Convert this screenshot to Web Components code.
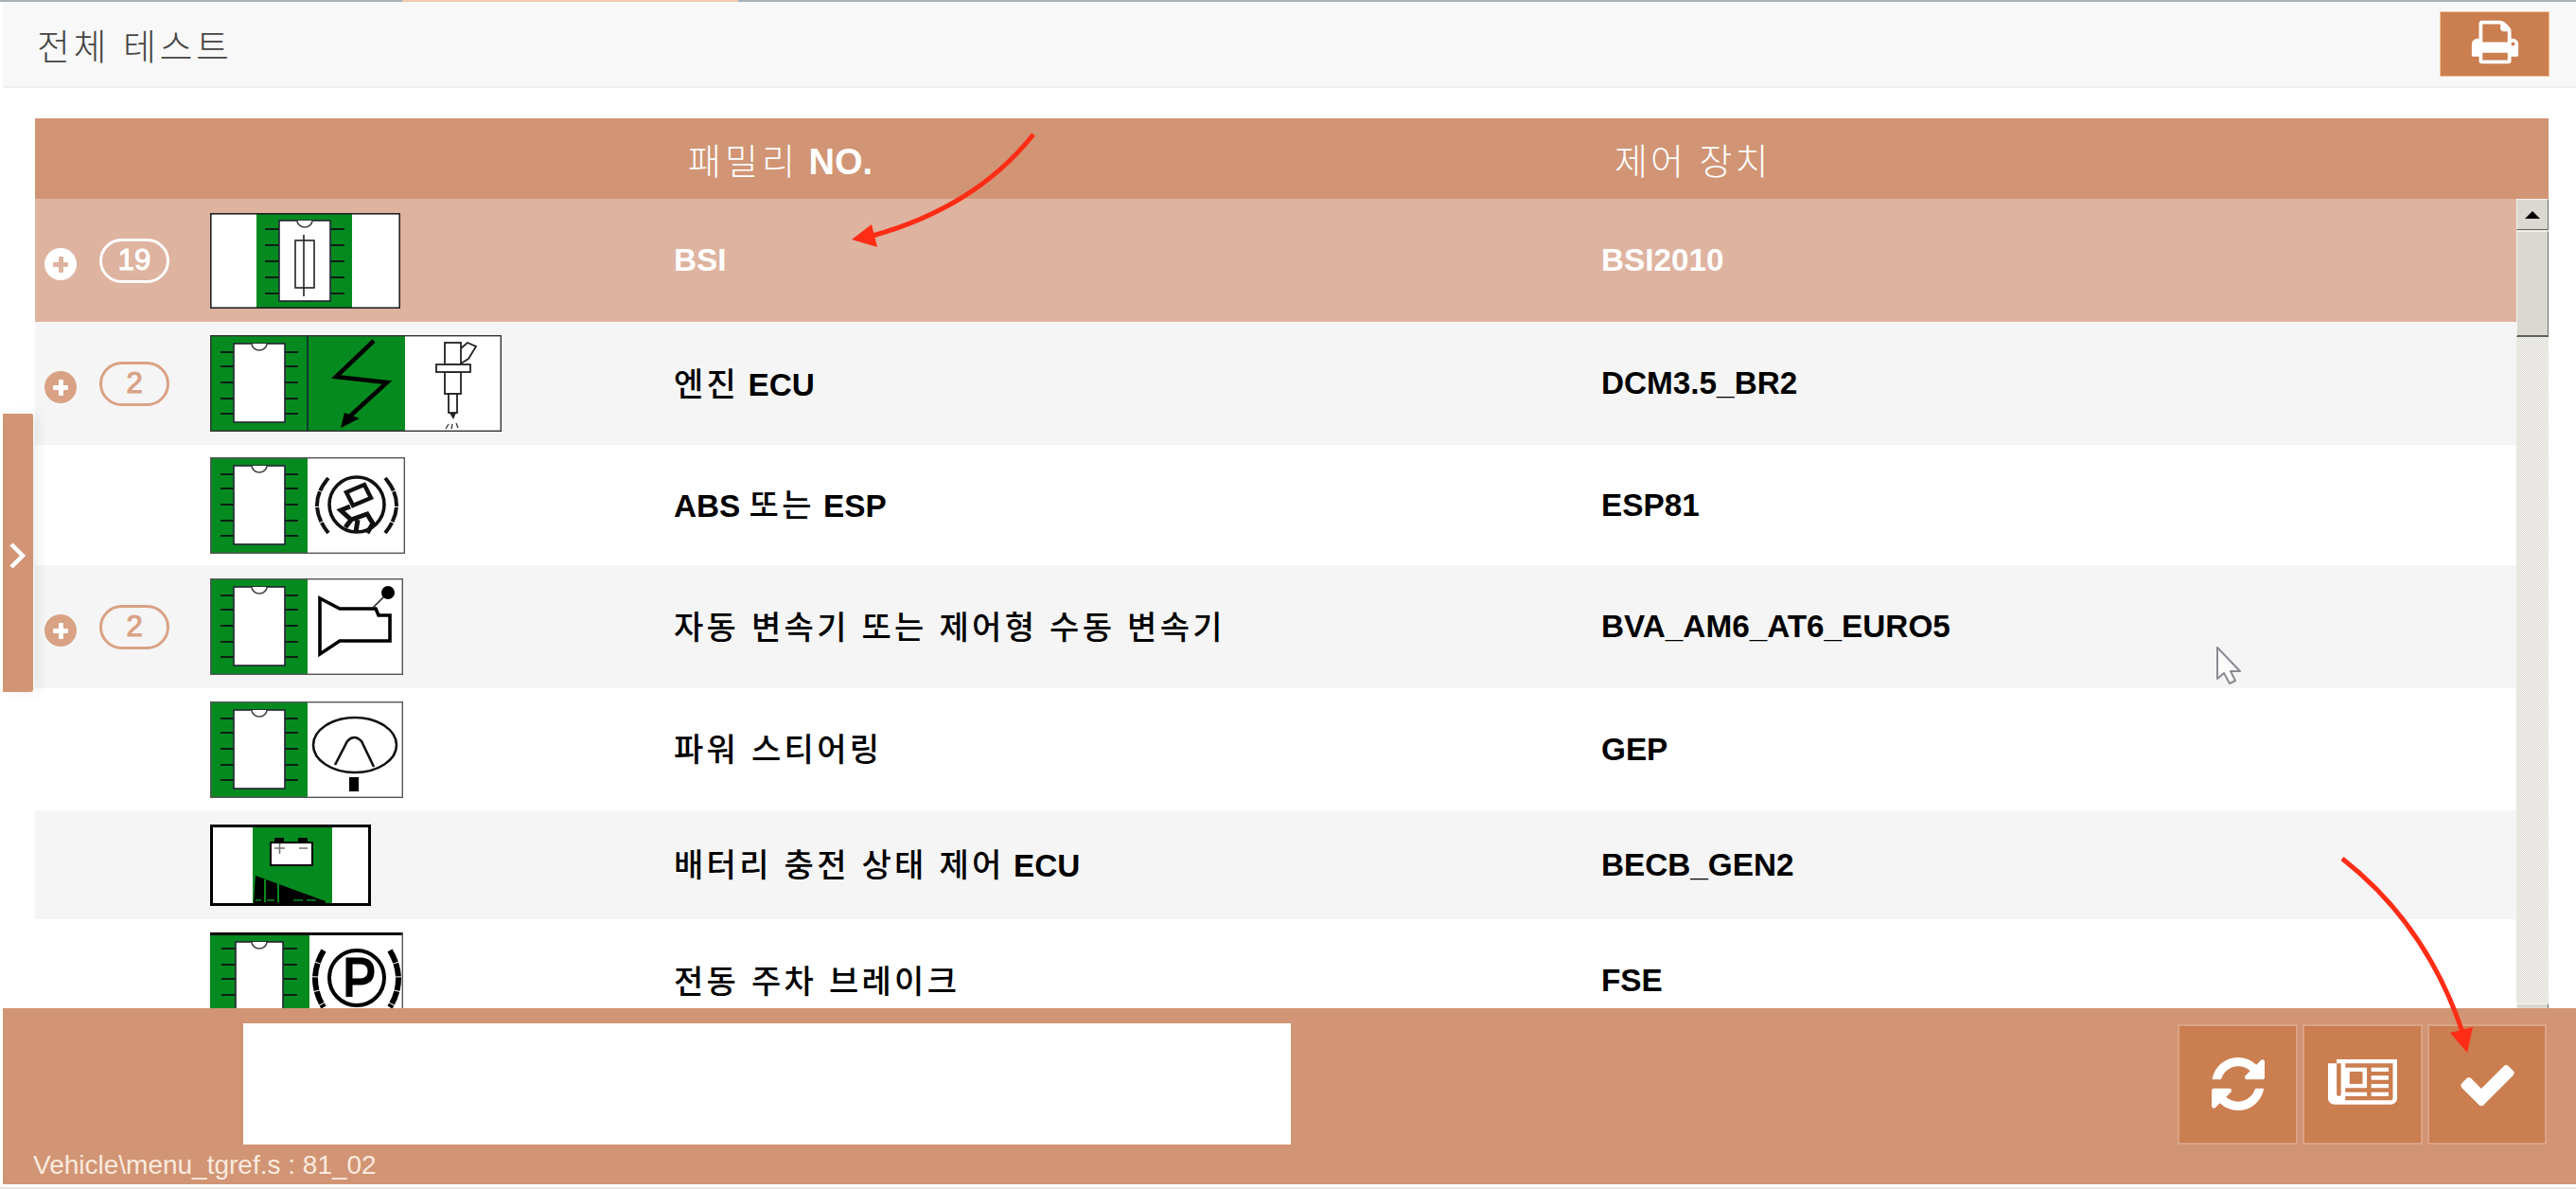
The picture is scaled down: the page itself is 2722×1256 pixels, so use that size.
<!DOCTYPE html>
<html lang="ko">
<head>
<meta charset="utf-8">
<title>전체 테스트</title>
<style>
  html, body { margin: 0; padding: 0; background: #fff; }
  body { font-family: "Liberation Sans", "Noto Sans CJK KR", sans-serif; width: 2722px; height: 1256px; overflow: hidden; }
</style>
</head>
<body>
<test-page>
  <title-bar slot="top"><kr-text size="38" space="3.5" weight="300" color="#444">전체 테스트</kr-text></title-bar>

  <table-head slot="main">
    <span slot="family"><kr-text size="38" space="4" weight="300">패밀리</kr-text> <b>NO.</b></span>
    <span slot="device"><kr-text size="38" space="3" weight="300">제어 장치</kr-text></span>
  </table-head>

  <test-list slot="main">
    <test-row h="130" state="sel" count="19" device="BSI2010"><ecu-icon slot="icon" kind="fuse"></ecu-icon>BSI</test-row>
    <test-row h="130" state="alt" count="2" device="DCM3.5_BR2"><ecu-icon slot="icon" kind="engine"></ecu-icon><kr-text>엔진</kr-text> ECU</test-row>
    <test-row h="127" device="ESP81"><ecu-icon slot="icon" kind="abs"></ecu-icon>ABS <kr-text>또는</kr-text> ESP</test-row>
    <test-row h="130" state="alt" count="2" device="BVA_AM6_AT6_EURO5"><ecu-icon slot="icon" kind="gearbox"></ecu-icon><kr-text>자동 변속기 또는 제어형 수동 변속기</kr-text></test-row>
    <test-row h="129" device="GEP"><ecu-icon slot="icon" kind="steering"></ecu-icon><kr-text>파워 스티어링</kr-text></test-row>
    <test-row h="115" state="alt" device="BECB_GEN2"><ecu-icon slot="icon" kind="battery"></ecu-icon><kr-text>배터리 충전 상태 제어</kr-text> ECU</test-row>
    <test-row h="130" device="FSE"><ecu-icon slot="icon" kind="parking"></ecu-icon><kr-text>전동 주차 브레이크</kr-text></test-row>
  </test-list>

  <bottom-bar slot="bottom" path="Vehicle\menu_tgref.s : 81_02"></bottom-bar>
  <side-handle slot="over"></side-handle>
  <annot-layer slot="over"></annot-layer>
</test-page>

<script>
const fa = {
  print: ["0 0 1792 1792", "M448 1536h896v-256h-896v256zm0-640h896v-384h-160q-40 0-68-28t-28-68v-160h-640v640zm1152 64q0-26-19-45t-45-19-45 19-19 45 19 45 45 19 45-19 19-45zm128 0v416q0 13-9.5 22.5t-22.5 9.5h-224v160q0 40-28 68t-68 28h-960q-40 0-68-28t-28-68v-160h-224q-13 0-22.5-9.5t-9.5-22.5v-416q0-79 56.5-135.5t135.5-56.5h64v-544q0-40 28-68t68-28h672q40 0 88 20t76 48l152 152q28 28 48 76t20 88v256h64q79 0 135.5 56.5t56.5 135.5z"],
  refresh: ["0 0 1536 1536", "M1511 928q0 5-1 7-64 268-268 434.5t-478 166.5q-146 0-282.5-55t-243.5-157l-129 129q-19 19-45 19t-45-19-19-45v-448q0-26 19-45t45-19h448q26 0 45 19t19 45-19 45l-137 137q71 66 161 102t187 36q134 0 250-65t186-179q11-17 53-117 8-23 30-23h192q13 0 22.5 9.5t9.5 22.5zm25-800v448q0 26-19 45t-45 19h-448q-26 0-45-19t-19-45 19-45l138-138q-148-137-349-137-134 0-250 65t-186 179q-11 17-53 117-8 23-30 23h-199q-13 0-22.5-9.5t-9.5-22.5v-7q65-268 270-434.5t480-166.5q146 0 284 55.5t245 156.5l130-129q19-19 45-19t45 19 19 45z"],
  news: ["0 128 2048 1536", "M1024 512h-384v384h384v-384zm128 640v128h-640v-128h640zm0-768v640h-640v-640h640zm640 768v128h-512v-128h512zm0-256v128h-512v-128h512zm0-256v128h-512v-128h512zm0-256v128h-512v-128h512zm128 960v-1088h-1408v1088q0 30-11 64h1355q26 0 45-19t19-45zm-1536-192v-896h-128v960q0 26 19 45t45 19 45-19 19-45zm1664 192q0 80-56 136t-136 56h-1664q-80 0-136-56t-56-136v-1088h256v-128h1792v1216z"],
  check: ["0 0 1792 1792", "M1671 566q0 40-28 68l-724 724-136 136q-28 28-68 28t-68-28l-136-136-362-362q-28-28-28-68t28-68l136-136q28-28 68-28t68 28l294 295 656-657q28-28 68-28t68 28l136 136q28 28 28 68z"]
};

function faSvg(name, w, h) {
  return `<svg width="${w}" height="${h}" viewBox="${fa[name][0]}" preserveAspectRatio="none"><path fill="#fff" d="${fa[name][1]}"/></svg>`;
}

class KrText extends HTMLElement {
  constructor() {
    super();
    const size = this.getAttribute("size") || 34;
    const space = this.getAttribute("space") || 3.3;
    const weight = this.getAttribute("weight") || 500;
    const color = this.getAttribute("color") || "inherit";
    this.attachShadow({ mode: "open" }).innerHTML = `
      <style>
        :host { display: inline; font-family: "Noto Sans CJK KR", sans-serif; font-size: ${size}px; letter-spacing: ${space}px; font-weight: ${weight}; color: ${color}; }
      </style><slot></slot>`;
  }
}

class TitleBar extends HTMLElement {
  constructor() {
    super();
    this.attachShadow({ mode: "open" }).innerHTML = `
      <style>
        :host { display: flex; align-items: center; justify-content: space-between; height: 89px; margin-left: 3px; padding: 0 28px 0 36px; background: #f8f8f8; border-bottom: 2px solid #efefef; }
        .print { display: flex; align-items: center; justify-content: center; width: 114px; height: 67px; margin-top: -1px; background: #cb7e50; border: 1px solid #f3c08f; }
        svg { display: block; margin-top: -4px; }
      </style>
      <slot></slot>
      <div class="print">${faSvg("print", 53, 53)}</div>`;
  }
}

class TableHead extends HTMLElement {
  constructor() {
    super();
    this.attachShadow({ mode: "open" }).innerHTML = `
      <style>
        :host { display: grid; grid-template-columns: 675px 980px 1fr; align-items: center; flex: none; height: 85px; background: #d19575; color: #fff; font-size: 38px; font-weight: 400; white-space: nowrap; }
        .fam { grid-column: 2; padding-left: 15px; }
        .dev { grid-column: 3; padding-left: 14px; }
      </style>
      <div class="fam"><slot name="family"></slot></div>
      <div class="dev"><slot name="device"></slot></div>`;
  }
}

class TestList extends HTMLElement {
  constructor() {
    super();
    this.attachShadow({ mode: "open" }).innerHTML = `
      <style>
        :host { display: flex; flex: 1; min-height: 0; overflow: hidden; }
        .rows { flex: 1; min-width: 0; overflow: hidden; }
        .bar { width: 34px; flex: none; display: flex; flex-direction: column; background: repeating-conic-gradient(#dbd9d3 0 25%, #f6f5f2 0 50%) 0 0 / 2px 2px; }
        .btn { background: #dbd8d2; border: 1px solid; border-color: #f4f3f0 #6f6f6f #5f5f5f #f4f3f0; box-sizing: border-box; }
        .up { height: 33px; margin-bottom: 1px; display: flex; align-items: center; justify-content: center; }
        .up i { width: 0; height: 0; border: 8px solid transparent; border-top: 0; border-bottom: 8px solid #000; }
        .thumb { height: 112px; border-bottom-width: 2px; }
        .gap { flex: 1; }
        .down { height: 5px; border-bottom: 0; }
      </style>
      <div class="rows"><slot></slot></div>
      <div class="bar">
        <div class="btn up"><i></i></div>
        <div class="btn thumb"></div>
        <div class="gap"></div>
        <div class="btn down"></div>
      </div>`;
  }
}

class TestRow extends HTMLElement {
  constructor() {
    super();
    const count = this.getAttribute("count");
    const device = this.getAttribute("device") || "";
    const h = this.getAttribute("h") || 130;
    this.attachShadow({ mode: "open" }).innerHTML = `
      <style>
        :host { display: grid; grid-template-columns: 185px 490px 980px 1fr; align-items: center; height: ${h}px; background: #fff; color: #000; font-size: 33.300px; font-weight: 700; white-space: nowrap; }
        :host([state="alt"]) { background: #f5f5f5; }
        :host([state="sel"]) { background: #deb3a0; color: #fff; --tone: #fff; --plus: #deb3a0; }
        .exp { display: flex; align-items: center; gap: 24px; padding-left: 10px; }
        .plus { width: 34px; height: 34px; border-radius: 50%; background: var(--tone, #d9a285); position: relative; margin-top: 7px; }
        .plus::before, .plus::after { content: ""; position: absolute; background: var(--plus, #fff); border-radius: 1px; }
        .plus::before { left: 9px; right: 9px; top: 15px; height: 5px; }
        .plus::after { top: 9px; bottom: 8px; left: 15px; width: 5px; }
        .count { box-sizing: border-box; width: 74px; height: 47px; border: 3px solid var(--tone, #d9a285); border-radius: 24px; color: var(--tone, #d9a285); font-size: 31px; font-weight: 400; -webkit-text-stroke: 1.1px var(--tone, #d9a285); display: flex; align-items: center; justify-content: center; }
        .icon { display: flex; }
        .name, .dev { line-height: 44px; }
      </style>
      <div class="exp">${count ? `<div class="plus"></div><div class="count">${count}</div>` : ""}</div>
      <div class="icon"><slot name="icon"></slot></div>
      <div class="name"><slot></slot></div>
      <div class="dev">${device}</div>`;
  }
}

// chip with its five pins on both sides, used by most of the pictograms
function chip(x1, x2, y1, y2, pins, len) {
  const cx = (x1 + x2) / 2;
  let s = "";
  for (const y of pins) {
    s += `<path d="M${x1 - len} ${y}H${x1}M${x2} ${y}H${x2 + len}" stroke="#0c1f12" stroke-width="2"/>`;
  }
  s += `<rect x="${x1}" y="${y1}" width="${x2 - x1}" height="${y2 - y1}" fill="#fff" stroke="#223" stroke-width="1.6"/>`;
  s += `<path d="M${cx - 8} ${y1}a8 7 0 0 0 16 0" fill="#fff" stroke="#444" stroke-width="1.6"/>`;
  return s;
}

const GREEN = "#058a1f";
const PINS = [18, 33, 50, 67, 83];

const pictos = {
  fuse: [201, 101, `
    <rect width="201" height="101" fill="#fff"/>
    <rect x="49" width="101" height="101" fill="${GREEN}"/>
    ${chip(73, 127, 8, 93, [17, 34, 51, 68, 85], 15)}
    <rect x="90" y="29" width="20" height="50" fill="none" stroke="#222" stroke-width="1.6"/>
    <path d="M99 23V88" stroke="#222" stroke-width="1.6"/>
    <rect x=".8" y=".8" width="199.4" height="99.4" fill="none" stroke="#222" stroke-width="1.6"/>`],
  engine: [308, 102, `
    <rect width="308" height="102" fill="#fff"/>
    <rect width="206" height="102" fill="${GREEN}"/>
    <path d="M103 0V102" stroke="#123" stroke-width="1.5"/>
    ${chip(25, 79, 9, 92, PINS, 14)}
    <path d="M173 6L133 44L187 50L143 90" fill="none" stroke="#000" stroke-width="4.5"/>
    <path d="M138 98L142 82L158 88z" fill="#000"/>
    <g fill="#fff" stroke="#222" stroke-width="1.8">
      <path d="M265 14L272 8L281 12L273 25L265 30"/>
      <rect x="248" y="8" width="17" height="23"/>
      <rect x="248" y="39" width="17" height="23"/>
      <rect x="252" y="62" width="9" height="20"/>
      <rect x="239" y="31" width="36" height="8"/>
    </g>
    <path d="M253 82H260L257 89z" fill="#222"/>
    <path d="M249 99l3-5M255 99l1-5M262 98l-2-5" stroke="#333" stroke-width="1.3"/>
    <rect x=".7" y=".7" width="306.6" height="100.6" fill="none" stroke="#333" stroke-width="1.4"/>`],
  abs: [206, 102, `
    <rect width="206" height="102" fill="#fff"/>
    <rect width="103" height="102" fill="${GREEN}"/>
    ${chip(25, 79, 9, 92, PINS, 14)}
    <circle cx="155" cy="50" r="29" fill="none" stroke="#111" stroke-width="3.6"/>
    <path d="M125 22Q101 50 125 80M185 22Q209 50 185 80" fill="none" stroke="#111" stroke-width="4" stroke-dasharray="16 1"/>
    <path d="M144 37L163 29L170 43L151 51z" fill="#fff" stroke="#111" stroke-width="4.4"/>
    <path d="M148 52L138 56L149 66L143 74M149 66L166 60L172 70L166 80M156 66L154 79" fill="none" stroke="#111" stroke-width="5"/>
    <rect x=".7" y=".7" width="204.6" height="100.6" fill="none" stroke="#555" stroke-width="1.4"/>`],
  gearbox: [204, 102, `
    <rect width="204" height="102" fill="#fff"/>
    <rect width="103" height="102" fill="${GREEN}"/>
    ${chip(25, 79, 9, 92, PINS, 14)}
    <path d="M116 21L137 32H175L178 39H190V66H137L116 80z" fill="none" stroke="#000" stroke-width="3.6"/>
    <path d="M172 31L187 16" stroke="#222" stroke-width="1.6"/>
    <circle cx="188" cy="15" r="7" fill="#000"/>
    <rect x=".7" y=".7" width="202.6" height="100.6" fill="none" stroke="#555" stroke-width="1.4"/>`],
  steering: [204, 102, `
    <rect width="204" height="102" fill="#fff"/>
    <rect width="103" height="102" fill="${GREEN}"/>
    ${chip(25, 79, 9, 92, PINS, 14)}
    <ellipse cx="153" cy="46" rx="44" ry="29" fill="none" stroke="#111" stroke-width="2.6"/>
    <path d="M132 67L145 42Q152 34 160 42L173 69" fill="none" stroke="#111" stroke-width="2.6"/>
    <rect x="147" y="80" width="10" height="15" fill="#000"/>
    <rect x=".7" y=".7" width="202.6" height="100.6" fill="none" stroke="#555" stroke-width="1.4"/>`],
  battery: [170, 86, `
    <rect width="170" height="86" fill="#fff"/>
    <rect x="45" width="84" height="86" fill="${GREEN}"/>
    <path d="M68 19V14H78V19M93 19V14H103V19" fill="#000"/>
    <rect x="64" y="19" width="44" height="24" fill="#fff" stroke="#000" stroke-width="2"/>
    <path d="M68 25H79M73.500 20V31M94 25H103" stroke="#777" stroke-width="1.6"/>
    <path d="M48 54L122 81V83H46z" fill="#000"/>
    <path d="M58 58V82M72 62V82" stroke="${GREEN}" stroke-width="2"/>
    <path d="M48 80h6M60 80h8M88 80h10M102 80h10" stroke="${GREEN}" stroke-width="1.4"/>
    <rect x="1.500" y="1.500" width="167" height="83" fill="none" stroke="#000" stroke-width="3"/>`],
  parking: [204, 102, `
    <rect width="204" height="102" fill="#fff"/>
    <rect width="105" height="102" fill="${GREEN}"/>
    ${chip(27, 77, 10, 100, [17, 34, 49, 66, 83], 15)}
    <circle cx="155" cy="48" r="29" fill="none" stroke="#000" stroke-width="4"/>
    <path d="M147 68V30H160Q170 31 170 41Q170 51 160 52H147" fill="none" stroke="#000" stroke-width="7"/>
    <path d="M120 19Q102 49 120 79M190 19Q208 49 190 79" fill="none" stroke="#000" stroke-width="6" stroke-dasharray="14 1"/>
    <path d="M0 1.500H204" stroke="#000" stroke-width="3"/>
    <path d="M203.300 0V102" stroke="#555" stroke-width="1.4"/>`]
};

class EcuIcon extends HTMLElement {
  constructor() {
    super();
    const [w, h, body] = pictos[this.getAttribute("kind")];
    this.attachShadow({ mode: "open" }).innerHTML = `
      <style>:host { display: block; width: ${w}px; height: ${h}px; } svg { display: block; }</style>
      <svg width="${w}" height="${h}" viewBox="0 0 ${w} ${h}">${body}</svg>`;
  }
}

class BottomBar extends HTMLElement {
  constructor() {
    super();
    const path = this.getAttribute("path") || "";
    this.attachShadow({ mode: "open" }).innerHTML = `
      <style>
        :host { display: flex; flex-direction: column; flex: none; height: 186px; margin-left: 3px; background: #d19575; }
        .top { display: flex; align-items: center; height: 128px; margin-top: 16px; padding-left: 254px; padding-right: 31px; }
        .box { width: 1107px; height: 128px; background: #fff; }
        .acts { margin-left: auto; display: flex; gap: 5px; }
        .act { box-sizing: border-box; width: 127px; height: 127px; background: #cb7e50; border: 2px solid #dba386; display: flex; align-items: center; justify-content: center; }
        .act.last { width: 126px; }
        .path { padding: 6px 0 0 32px; color: #fbeadf; font-size: 28px; line-height: 32px; }
      </style>
      <div class="top">
        <div class="box"></div>
        <div class="acts">
          <div class="act">${faSvg("refresh", 56, 56)}</div>
          <div class="act">${faSvg("news", 73, 52)}</div>
          <div class="act last">${faSvg("check", 65, 65)}</div>
        </div>
      </div>
      <div class="path">${path}</div>`;
  }
}

class SideHandle extends HTMLElement {
  constructor() {
    super();
    this.attachShadow({ mode: "open" }).innerHTML = `
      <style>
        :host { position: absolute; left: 3px; top: 437px; width: 32px; height: 294px; background: #d19575; border-radius: 0 2px 3px 0; box-shadow: 6px 0 12px rgba(0,0,0,.07); display: flex; align-items: center; justify-content: center; }
        svg { display: block; margin: 5px 2px 0 0; }
      </style>
      <svg width="20" height="30" viewBox="0 0 20 30"><path d="M4 3L16 15L4 27" fill="none" stroke="#fff" stroke-width="4.500"/></svg>`;
  }
}

// red hand drawn arrows and the mouse pointer captured on top of the page
class AnnotLayer extends HTMLElement {
  constructor() {
    super();
    this.attachShadow({ mode: "open" }).innerHTML = `
      <style>:host { position: absolute; inset: 0; pointer-events: none; } svg { display: block; }</style>
      <svg width="2722" height="1256" viewBox="0 0 2722 1256">
        <path d="M1092 142C1050 195 990 230 922 249" fill="none" stroke="#ff2d16" stroke-width="5"/>
        <path d="M900 253L921 237L927 261z" fill="#ff2d16"/>
        <path d="M2475 907C2530 950 2575 1010 2602 1090" fill="none" stroke="#ff2d16" stroke-width="5"/>
        <path d="M2607 1112L2589 1091L2613 1085z" fill="#ff2d16"/>
        <path d="M2343 684V717L2350 711L2356 722L2362 719L2357 709H2367z" fill="#fbfbfb" stroke="#8a8a92" stroke-width="2" stroke-linejoin="round"/>
      </svg>`;
  }
}

class TestPage extends HTMLElement {
  constructor() {
    super();
    this.attachShadow({ mode: "open" }).innerHTML = `
      <style>
        :host { display: flex; flex-direction: column; position: relative; width: 2722px; height: 1256px; background: #fff; overflow: hidden; }
        .strip { height: 2px; flex: none; background: linear-gradient(90deg, #a8b1b6 0 425px, #f0c9b0 425px 780px, #a8b1b6 780px); }
        .main { flex: none; height: 972px; box-sizing: border-box; padding: 32px 29px 0 37px; display: flex; flex-direction: column; overflow: hidden; }
        .foot { height: 3px; margin-top: 3px; flex: 1; background: #e8e7e3; }
      </style>
      <div class="strip"></div>
      <slot name="top"></slot>
      <div class="main"><slot name="main"></slot></div>
      <slot name="bottom"></slot>
      <div class="foot"></div>
      <slot name="over"></slot>`;
  }
}

customElements.define("kr-text", KrText);
customElements.define("title-bar", TitleBar);
customElements.define("table-head", TableHead);
customElements.define("test-list", TestList);
customElements.define("test-row", TestRow);
customElements.define("ecu-icon", EcuIcon);
customElements.define("bottom-bar", BottomBar);
customElements.define("side-handle", SideHandle);
customElements.define("annot-layer", AnnotLayer);
customElements.define("test-page", TestPage);
</script>
</body>
</html>
